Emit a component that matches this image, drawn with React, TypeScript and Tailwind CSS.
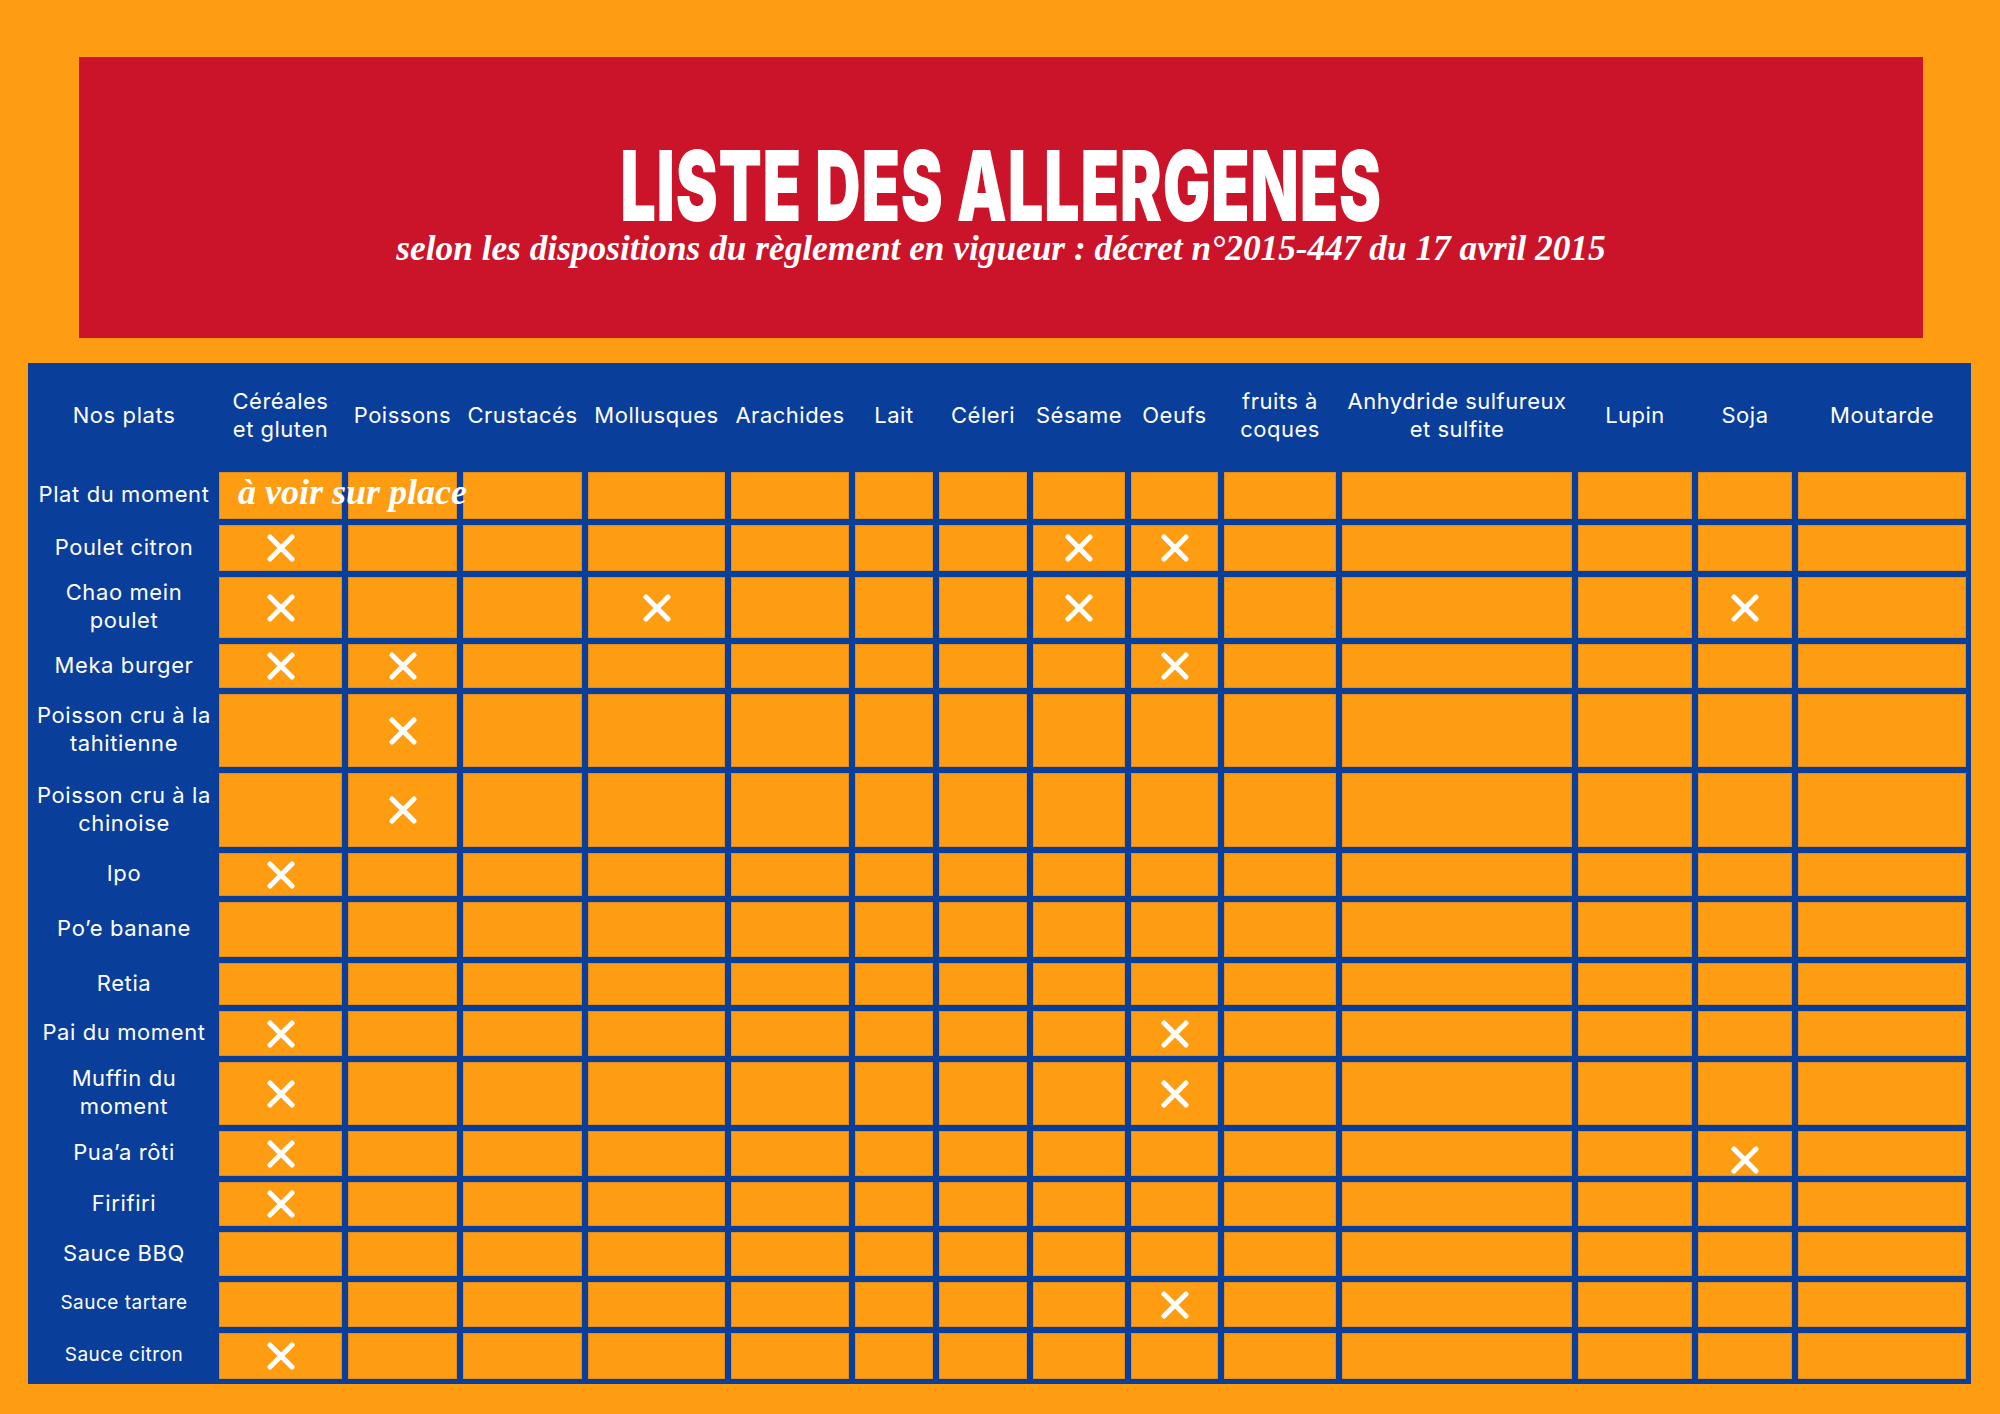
import React from "react";

const allergens = [
  ["Céréales", "et gluten"],
  ["Poissons"],
  ["Crustacés"],
  ["Mollusques"],
  ["Arachides"],
  ["Lait"],
  ["Céleri"],
  ["Sésame"],
  ["Oeufs"],
  ["fruits à", "coques"],
  ["Anhydride sulfureux", "et sulfite"],
  ["Lupin"],
  ["Soja"],
  ["Moutarde"],
];

type Dish = {
  name: string[];
  marks: number[];
  small?: boolean;
  note?: string;
  low?: number; // mark drawn a bit lower in the original
};

// indexes point into allergens
const dishes: Dish[] = [
  { name: ["Plat du moment"], marks: [], note: "à voir sur place" },
  { name: ["Poulet citron"], marks: [0, 7, 8] },
  { name: ["Chao mein", "poulet"], marks: [0, 3, 7, 12] },
  { name: ["Meka burger"], marks: [0, 1, 8] },
  { name: ["Poisson cru à la", "tahitienne"], marks: [1] },
  { name: ["Poisson cru à la", "chinoise"], marks: [1] },
  { name: ["Ipo"], marks: [0] },
  { name: ["Po’e banane"], marks: [] },
  { name: ["Retia"], marks: [] },
  { name: ["Pai du moment"], marks: [0, 8] },
  { name: ["Muffin du", "moment"], marks: [0, 8] },
  { name: ["Pua’a rôti"], marks: [0, 12], low: 12 },
  { name: ["Firifiri"], marks: [0] },
  { name: ["Sauce BBQ"], marks: [] },
  { name: ["Sauce tartare"], marks: [8], small: true },
  { name: ["Sauce citron"], marks: [0], small: true },
];

function Cross() {
  return (
    <svg width="28" height="28" viewBox="0 0 28 28" fill="none">
      <path
        d="M3 3 L25 25 M25 3 L3 25"
        stroke="white"
        strokeWidth="5"
        strokeLinecap="round"
      />
    </svg>
  );
}

export default function App() {
  return (
    <div className="w-[2000px] h-[1414px] bg-[#ff9d12] pt-[57px] font-['Inter','Liberation_Sans',sans-serif] text-white overflow-hidden">
      {/* banner */}
      <div className="ml-[79px] w-[1844px] h-[281px] bg-[#cb132a] pt-[89px]">
        <h1 className="text-center text-[98px] leading-[80px] font-black scale-x-[0.645] tracking-[1px]">
          LISTE DES ALLERGENES
        </h1>
        <p className="mt-[5px] text-center text-[35.3px] leading-none font-['Liberation_Serif',serif] italic font-bold">
          selon les dispositions du règlement en vigueur : décret n°2015-447 du 17 avril 2015
        </p>
      </div>

      {/* table */}
      <div className="mt-[25px] ml-[28px] w-[1943px] bg-[#0a3e9b] pr-[5px] pb-[5px]">
        <div className="grid gap-[6px] grid-cols-[185px_123px_109px_119px_137px_118px_78px_88px_92px_87px_112px_230px_114px_94px_168px] grid-rows-[103px_47px_46px_61px_44px_73px_74px_43px_55px_42px_45px_63px_45px_44px_44px_45px_46px]">
          <div className="flex items-center justify-center pl-[7px] text-[22px] leading-[28px] tracking-[0.6px]">
            Nos plats
          </div>
          {allergens.map((lines, i) => (
            <div
              key={i}
              className="flex flex-col items-center justify-center text-center text-[22px] leading-[28px] tracking-[0.5px]"
            >
              {lines.map((l) => (
                <span key={l} className="whitespace-nowrap">
                  {l}
                </span>
              ))}
            </div>
          ))}

          {dishes.map((d, r) => (
            <React.Fragment key={r}>
              <div
                className={
                  d.small
                    ? "flex flex-col items-center justify-center pl-[7px] pb-[3px] text-center text-[19px] leading-[26px] tracking-[0.5px]"
                    : "flex flex-col items-center justify-center pl-[7px] pb-[3px] text-center text-[22px] leading-[28px] tracking-[0.6px]"
                }
              >
                {d.name.map((l) => (
                  <span key={l} className="whitespace-nowrap">
                    {l}
                  </span>
                ))}
              </div>
              {allergens.map((_, c) => (
                <div
                  key={c}
                  className={
                    d.low === c
                      ? "relative flex items-center justify-center pt-[12px] bg-[#ff9d12] border border-[#dd8c22]"
                      : "relative flex items-center justify-center bg-[#ff9d12] border border-[#dd8c22]"
                  }
                >
                  {d.marks.includes(c) && <Cross />}
                  {d.note && c === 0 && (
                    <span className="absolute z-10 left-[18px] top-[-1px] whitespace-nowrap font-['Liberation_Serif',serif] italic font-bold text-[36px] leading-[40px]">
                      {d.note}
                    </span>
                  )}
                </div>
              ))}
            </React.Fragment>
          ))}
        </div>
      </div>
    </div>
  );
}
